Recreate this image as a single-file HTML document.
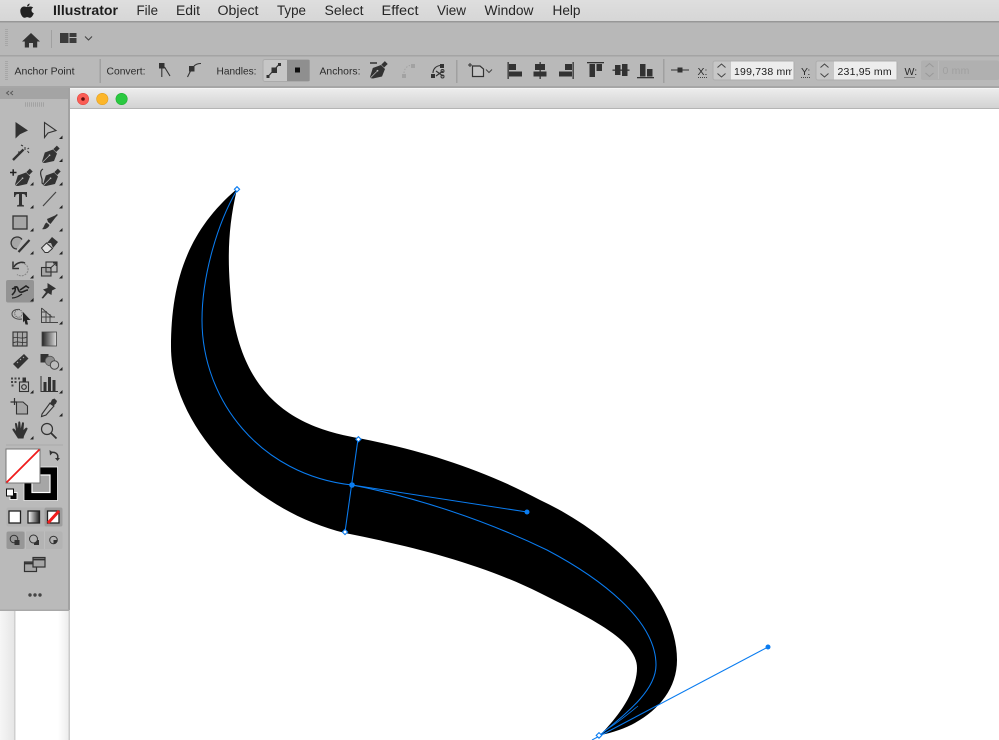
<!DOCTYPE html>
<html>
<head>
<meta charset="utf-8">
<style>
html,body{margin:0;padding:0;background:#fff;width:999px;height:740px;overflow:hidden}
svg{display:block;position:absolute;left:0;top:0}
text{font-family:"Liberation Sans",sans-serif}
.m{font-size:13.5px;fill:#262626}
.l{font-size:10.5px;fill:#2c2c2c}
.v{font-size:10.5px;fill:#1c1c1c}
</style>
</head>
<body>
<svg width="999" height="740" viewBox="0 0 999 740" xmlns="http://www.w3.org/2000/svg">
<defs>
<linearGradient id="mb" x1="0" y1="0" x2="0" y2="1"><stop offset="0" stop-color="#dedede"/><stop offset="1" stop-color="#d6d6d6"/></linearGradient>
<linearGradient id="tb" x1="0" y1="0" x2="0" y2="1"><stop offset="0" stop-color="#ececec"/><stop offset="1" stop-color="#d2d2d2"/></linearGradient>
<linearGradient id="gr" x1="0" y1="0" x2="1" y2="0"><stop offset="0" stop-color="#222"/><stop offset="1" stop-color="#ddd"/></linearGradient>
<linearGradient id="gr2" x1="0" y1="0" x2="1" y2="0"><stop offset="0" stop-color="#fff"/><stop offset="1" stop-color="#222"/></linearGradient>
<linearGradient id="sl" x1="0" y1="0" x2="1" y2="0"><stop offset="0" stop-color="#f6f6f6"/><stop offset="1" stop-color="#e6e6e6"/></linearGradient>
<linearGradient id="sr" x1="0" y1="0" x2="1" y2="0"><stop offset="0" stop-color="#fff"/><stop offset="1" stop-color="#ececec"/></linearGradient>
<filter id="b" filterUnits="userSpaceOnUse" x="0" y="0" width="999" height="740"><feGaussianBlur stdDeviation="0.35"/></filter>
<path id="t" d="M3.500 0V3.500H0Z" fill="#222"/>
<g id="pn">
<path fill="#333" d="M0 16L2.800 7L11 4L15 8L12 15.500L3 17.500L1 17.300Z"/>
<path d="M.8 16.500L6.800 10.500" stroke="#bababa" stroke-width=".7"/>
<circle cx="7.500" cy="9.800" r=".9" fill="#bababa"/>
<rect x="12.500" y="0.800" width="4" height="5" fill="#333" transform="rotate(45 14.500 3.300)"/>
</g>
</defs>

<!-- page background -->
<rect width="999" height="740" fill="#fff"/>
<rect x="0" y="600" width="14" height="140" fill="url(#sl)"/>
<rect x="14" y="600" width="1.500" height="140" fill="#cfcfcf"/>
<rect x="58" y="600" width="11" height="140" fill="url(#sr)"/>
<rect x="68.500" y="100" width="1.500" height="640" fill="#cbcbcb"/>

<!-- artwork -->
<path fill="#000" d="M237 189C186 232 171 285 171 347C171 425 250 510 345 533C410 546 480 563 540 593C590 618 637 640 637 668C637 690 620 715 600 735C640 728 677 700 677 660C677 600 615 535 540 500C480 468 420 450 358 438C300 428 245 402 232 310C228 270 226 235 237 189Z"/>
<g fill="none" stroke="#0a7cf0" stroke-width="1.050">
<path d="M237 190C218 222 202 275 202 320C202 400 260 475 352 485C415 497 485 520 547 550C600 578 656 620 656 665C656 690 628 712 600 735"/>
<path d="M358 439L345 532"/>
<path d="M352 485L527 512"/>
<path d="M592 740L768 647"/>
<path d="M604 731C615 725 628 714 638 706" stroke-width=".8"/>
</g>
<g fill="#0a7cf0">
<circle cx="352" cy="485" r="2.800"/>
<circle cx="527" cy="512" r="2.500"/>
<circle cx="768" cy="647" r="2.500"/>
</g>
<g fill="#fff" stroke="#0a7cf0" stroke-width="1.100">
<path d="M237 186.700L239.600 189.300L237 191.900L234.400 189.300Z"/>
<path d="M358.400 436.700L361 439.300L358.400 441.900L355.800 439.300Z"/>
<path d="M345 529.400L347.600 532L345 534.600L342.400 532Z"/>
<path d="M599 732.600L601.800 735.400L599 738.200L596.200 735.400Z"/>
</g>

<g filter="url(#b)">
<!-- menu bar -->
<rect width="999" height="21" fill="url(#mb)"/>
<path fill="#222" d="M29.500 3.500C28 4 27 5 27 6.500C28.500 6.500 29.800 5.300 29.500 3.500ZM27 7C25.800 7 25 6.400 24 6.500C22 6.700 20.300 8.300 20.300 11C20.300 14 22.500 17.800 24.400 17.800C25.400 17.800 26 17.100 27.200 17.100C28.400 17.100 28.900 17.800 30 17.800C31.700 17.800 33.300 15 33.800 13.300C32.400 12.700 31.500 11.600 31.500 10.200C31.500 9 32.100 8.100 33.200 7.500C32.400 6.900 31.400 6.500 30.400 6.500C29 6.500 28 7 27 7Z"/>
<text x="53" y="15" font-size="13.500" font-weight="700" fill="#1f1f1f" textLength="65" lengthAdjust="spacingAndGlyphs">Illustrator</text>
<g class="m">
<text x="136.500" y="15" textLength="21.500" lengthAdjust="spacingAndGlyphs">File</text>
<text x="176" y="15" textLength="24" lengthAdjust="spacingAndGlyphs">Edit</text>
<text x="217.500" y="15" textLength="41" lengthAdjust="spacingAndGlyphs">Object</text>
<text x="277" y="15" textLength="29" lengthAdjust="spacingAndGlyphs">Type</text>
<text x="324.500" y="15" textLength="39" lengthAdjust="spacingAndGlyphs">Select</text>
<text x="381.500" y="15" textLength="37" lengthAdjust="spacingAndGlyphs">Effect</text>
<text x="437" y="15" textLength="29" lengthAdjust="spacingAndGlyphs">View</text>
<text x="484.500" y="15" textLength="49" lengthAdjust="spacingAndGlyphs">Window</text>
<text x="552.500" y="15" textLength="28" lengthAdjust="spacingAndGlyphs">Help</text>
</g>
<rect y="21" width="999" height="1.500" fill="#979797"/>

<!-- toolbars -->
<rect y="22.500" width="999" height="32.500" fill="#b8b8b8"/>
<rect y="55" width="999" height="1.500" fill="#a4a4a4"/>
<rect y="56.500" width="999" height="29.500" fill="#b9b9b9"/>
<rect y="86" width="999" height="2" fill="#a6a6a6"/>

<!-- grips -->
<path d="M6.500 29V47M6.500 61V80" stroke="#a6a6a6" stroke-width="3" stroke-dasharray="1 1"/>

<!-- home & workspace -->
<path fill="#333" d="M31 33L22 41.500L24.800 41.500L24.800 47.500L29 47.500L29 43L33 43L33 47.500L37.200 47.500L37.200 41.500L40 41.500Z"/>
<rect x="51" y="30" width="1" height="18" fill="#a0a0a0"/>
<g fill="#3a3a3a">
<rect x="60" y="33" width="8.500" height="10"/>
<rect x="69.500" y="33" width="7" height="4"/>
<rect x="69.500" y="38" width="7" height="5"/>
</g>
<path d="M85 36.500L88.500 40L92 36.500" fill="none" stroke="#444" stroke-width="1.100"/>

<!-- anchor row -->
<text class="l" x="14.500" y="74.500" textLength="60" lengthAdjust="spacingAndGlyphs">Anchor Point</text>
<rect x="99.500" y="59" width="1.500" height="24" fill="#a0a0a0"/>
<text class="l" x="106.500" y="74.500" textLength="39" lengthAdjust="spacingAndGlyphs">Convert:</text>
<rect x="159" y="63" width="5.500" height="5.500" fill="#333"/>
<path d="M161.800 68V77M164.500 67L170 76" stroke="#333" stroke-width="1.100" fill="none"/>
<rect x="189" y="66" width="5.500" height="5.500" fill="#333"/>
<path d="M194 66C196 64 198 63.500 201 63.500M190.500 71L187.500 77" stroke="#333" stroke-width="1.100" fill="none"/>
<text class="l" x="216.500" y="74.500" textLength="40" lengthAdjust="spacingAndGlyphs">Handles:</text>
<rect x="263" y="59.500" width="46.500" height="22" rx="2" fill="#c6c6c6" stroke="#aaa"/>
<rect x="287" y="60" width="22.500" height="21" fill="#8f8f8f"/>
<rect x="295" y="67.500" width="5" height="5" fill="#111"/>
<path d="M268 76.500L279 64.500" stroke="#333" stroke-width="1.100"/>
<rect x="271.500" y="67.500" width="5.500" height="5.500" fill="#333"/>
<rect x="278" y="63" width="3" height="3" fill="#333"/>
<rect x="266.500" y="75" width="3" height="3" fill="#333"/>
<text class="l" x="319.500" y="74.500" textLength="41" lengthAdjust="spacingAndGlyphs">Anchors:</text>
<!-- pen minus -->
<use href="#pn" x="370" y="61"/>
<path d="M370 63H377" stroke="#333" stroke-width="1.500"/>
<!-- disabled -->
<g fill="#a2a2a2">
<rect x="402" y="74" width="4" height="4"/>
<rect x="411" y="64" width="4" height="4"/>
</g>
<path d="M404 73C404 69 407 66 410 65.500" stroke="#a2a2a2" fill="none" stroke-dasharray="1.500 1.500"/>
<!-- scissors -->
<rect x="431" y="74" width="4" height="4" fill="#333"/>
<rect x="440" y="64" width="4" height="4" fill="#333"/>
<path d="M433 73C433 69 436 66 440 65.500M436 71L443 76M443 71L436 76" stroke="#333" fill="none" stroke-width="1.100"/>
<circle cx="442.500" cy="71" r="1.500" fill="none" stroke="#333"/>
<circle cx="442.500" cy="76.500" r="1.500" fill="none" stroke="#333"/>
<rect x="456" y="60" width="1.500" height="23" fill="#a0a0a0"/>
<!-- shape select -->
<path d="M472.500 66H480L483.500 69V76.500H472.500Z" fill="#c4c4c4" stroke="#333" stroke-width="1.200"/>
<path d="M468 65H472M470 63V67" stroke="#333"/>
<path d="M486 69.500L489 72.500L492 69.500" stroke="#444" fill="none" stroke-width="1"/>

<!-- align group -->
<g fill="#333">
<rect x="507.500" y="62" width="1.300" height="17"/><rect x="509" y="64" width="7" height="6"/><rect x="509" y="71.500" width="13" height="5"/>
<rect x="539.500" y="62" width="1.300" height="17"/><rect x="535" y="64" width="10" height="6"/><rect x="533.500" y="71.500" width="13" height="5"/>
<rect x="572.500" y="62" width="1.300" height="17"/><rect x="565" y="64" width="7" height="6"/><rect x="559" y="71.500" width="13" height="5"/>
<rect x="587" y="62" width="17" height="1.300"/><rect x="589.500" y="64" width="5.500" height="13"/><rect x="596.500" y="64" width="5.500" height="7"/>
<rect x="612.500" y="69.500" width="17" height="1.300"/><rect x="615" y="65" width="5.500" height="10"/><rect x="622" y="64" width="5.500" height="12"/>
<rect x="637" y="77" width="17" height="1.300"/><rect x="640" y="64" width="5.500" height="12.500"/><rect x="647" y="69" width="5.500" height="7.500"/>
</g>
<rect x="663" y="59" width="1.500" height="24" fill="#a0a0a0"/>
<path d="M671 70H689" stroke="#333" stroke-width="1.100"/>
<rect x="677.500" y="67.500" width="5" height="5" fill="#333"/>

<!-- X field -->
<text class="l" x="697.500" y="75" font-size="11">X:</text>
<path d="M698 77.500H707" stroke="#444" stroke-dasharray="1 1"/>
<rect x="713" y="61" width="81" height="19" rx="2" fill="#c7c7c7" stroke="#adadad"/>
<rect x="731" y="61.500" width="62.500" height="18" fill="#ededed"/>
<path d="M717.500 67.500L721.500 64L725.500 67.500M717.500 73.500L721.500 77L725.500 73.500" fill="none" stroke="#444" stroke-width="1"/>
<svg x="731" y="61" width="61" height="19"><text class="v" x="3" y="14" letter-spacing=".2">199,738 mm</text></svg>
<!-- Y field -->
<text class="l" x="801" y="75" font-size="11">Y:</text>
<path d="M801 77.500H810" stroke="#444" stroke-dasharray="1 1"/>
<rect x="816" y="61" width="81" height="19" rx="2" fill="#c7c7c7" stroke="#adadad"/>
<rect x="834" y="61.500" width="62.500" height="18" fill="#ededed"/>
<path d="M820.500 67.500L824.500 64L828.500 67.500M820.500 73.500L824.500 77L828.500 73.500" fill="none" stroke="#444" stroke-width="1"/>
<text class="v" x="837.500" y="75" letter-spacing=".2">231,95 mm</text>
<!-- W field -->
<text class="l" x="904.500" y="75" font-size="11">W:</text>
<path d="M904.500 77.500H915" stroke="#444" stroke-dasharray="1 1"/>
<rect x="921" y="60.500" width="78" height="19.500" rx="2" fill="#b0b0b0"/>
<rect x="938" y="61" width="1" height="18" fill="#bababa"/>
<path d="M925.500 67L929.500 63.500L933.500 67M925.500 73L929.500 76.500L933.500 73" fill="none" stroke="#999" stroke-width="1"/>
<text x="942.500" y="74" font-size="10.500" fill="#a0a0a0" letter-spacing=".2">0 mm</text>

<!-- document window title -->
<rect x="70" y="88" width="929" height="1.500" fill="#f4f4f4"/>
<rect x="70" y="89" width="929" height="19" fill="url(#tb)"/>
<rect x="70" y="108" width="929" height="1" fill="#b4b4b4"/>
<circle cx="83" cy="99" r="5.700" fill="#fb5d55" stroke="#e0453f" stroke-width=".6"/>
<circle cx="83" cy="99" r="1.800" fill="#60100c"/>
<circle cx="102.300" cy="99" r="5.700" fill="#fcb62c" stroke="#e09e20" stroke-width=".6"/>
<circle cx="121.600" cy="99" r="5.700" fill="#2ac93f" stroke="#20ad32" stroke-width=".6"/>

<!-- tool panel -->
<rect x="0" y="88" width="69" height="522" fill="#bababa"/>
<rect x="0" y="88" width="69" height="11" fill="#a4a4a4"/>
<rect x="68" y="88" width="2" height="522" fill="#a2a2a2"/>
<rect x="0" y="609.500" width="69" height="1.500" fill="#a8a8a8"/>
<path d="M9 91L6.500 93L9 95M13 91L10.500 93L13 95" fill="none" stroke="#555" stroke-width=".9"/>
<path d="M25 104.500H44" stroke="#a2a2a2" stroke-width="4.500" stroke-dasharray="1 1"/>

<!-- row 1 -->
<path fill="#333" d="M15.500 122V138.500L20 134.200L28 130.500Z"/>
<path fill="none" stroke="#333" stroke-width="1.100" d="M44.500 122.500V137.500L48 133L56 130.500Z"/>
<use href="#t" x="59" y="135.500"/>
<!-- wand, pen -->
<path d="M13 160L23.500 149.500" stroke="#333" stroke-width="2.400"/>
<path d="M25 147V150M23 146L21 145M27.500 151L29 153M20 152H18M29 148L27.500 149" stroke="#333" stroke-width="1"/>
<use href="#pn" x="42" y="145.500"/>
<use href="#t" x="59" y="158.500"/>
<!-- add anchor, anchor curv -->
<path d="M10 172.500H16.500M13.200 169.300V175.800" stroke="#222" stroke-width="1.500"/>
<use href="#pn" x="15" y="168.500"/>
<use href="#t" x="30" y="182"/>
<use href="#pn" x="43" y="168.500"/>
<path d="M43 169C39 171 41 176 42 179C42.500 182 41 184 44 184" fill="none" stroke="#333" stroke-width="1.200"/>
<use href="#t" x="59" y="182"/>
<!-- type, line -->
<path fill="#333" d="M14 192H27V197H25.800C25.500 194.500 24.800 194 22 194V204C22 205 22.500 205.300 24 205.300V206.500H17V205.300C18.500 205.300 19 205 19 204V194C16.200 194 15.500 194.500 15.200 197H14Z"/>
<use href="#t" x="30" y="205"/>
<path d="M43 206L56 192" stroke="#444" stroke-width="1.200"/>
<use href="#t" x="59" y="205"/>
<!-- rect, brush -->
<rect x="13" y="216" width="14" height="13" fill="#a6a6a6" stroke="#333" stroke-width="1.300"/>
<use href="#t" x="30" y="228"/>
<path fill="#333" d="M47 219L55 215.500L57 214L57.800 215L55.500 217.500L50.500 224L48 222ZM46.500 222.500L49.500 225C48.500 228 45 230 42 229C44 228 44 224 46.500 222.500Z"/>
<use href="#t" x="59" y="228"/>
<!-- shaper, eraser -->
<path d="M22 239.500A6 6 0 1 0 17 249" fill="#a6a6a6" stroke="#333" stroke-width="1.300"/>
<path d="M18.500 252L29.500 240" stroke="#333" stroke-width="2.200"/>
<use href="#t" x="30" y="251"/>
<path fill="#333" d="M47 243L52 237L58 242L53 248L51 243Z"/>
<path fill="#e0e0e0" stroke="#333" stroke-width="1" d="M41.500 248L46.500 243L52.500 248.500L48 252.500H45Z"/>
<use href="#t" x="59" y="251"/>
<!-- rotate, scale -->
<path d="M16 265C20 261 27 263 28 268.500C28.800 274 22 278 17 274.500" fill="none" stroke="#888" stroke-width="1.100" stroke-dasharray="2 1"/>
<path d="M13 261.500V268.500H19" fill="none" stroke="#333" stroke-width="1.500"/>
<path d="M14 267C16 262.500 22 261.500 25 263" fill="none" stroke="#333" stroke-width="1.500"/>
<use href="#t" x="30" y="275"/>
<rect x="41.500" y="267.500" width="9.500" height="8.500" fill="#a6a6a6" stroke="#333" stroke-width="1.100"/>
<rect x="46" y="262" width="11" height="10" fill="none" stroke="#333" stroke-width="1.100"/>
<path d="M50 268.500L56 263M53 263H56V266" fill="none" stroke="#333" stroke-width="1"/>
<use href="#t" x="59" y="275"/>
<!-- width tool selected -->
<rect x="6" y="280" width="28" height="22.500" rx="2" fill="#939393"/>
<path d="M12 295C15 292 16 290 15 287C19 286 17 290 20 292C23 293 25 290 28 290M12 289C14 288 16 288 16 287" fill="none" stroke="#222" stroke-width="1.600"/>
<path d="M20 290L26 286L29 288" fill="none" stroke="#222" stroke-width="1.600"/>
<path d="M12 298C16 298 19 296 22 294" fill="none" stroke="#222" stroke-width="1.200"/>
<use href="#t" x="30" y="298"/>
<!-- pin -->
<path fill="#333" d="M47.500 283L56 288.500L52 290.500L51.500 295L48 293L43 298.500L41.500 298L46 292L43 289.500L47.500 288Z"/>
<use href="#t" x="59" y="298"/>
<!-- shape builder, perspective -->
<path d="M20 309.500C14 309 12 311.500 12 314C12 317 16 320 22 319" fill="none" stroke="#444" stroke-width="1"/>
<circle cx="18.500" cy="313.500" r="3.800" fill="#bbb" stroke="#555" stroke-dasharray="1 1"/>
<path fill="#222" d="M23 312L30.500 320L27 320L28 324.500L25.500 324.500L24.500 320.500L23 322.500Z"/>
<path fill="none" stroke="#444" stroke-width="1" d="M41.500 308V322.500H58M41.500 308L52 317M46 311V322M50 314V322M41.500 312H47M41.500 317H55"/>
<use href="#t" x="59" y="321"/>
<!-- mesh, gradient -->
<rect x="13" y="332" width="14" height="14" fill="#a8a8a8" stroke="#333" stroke-width="1.100"/>
<path d="M13 338C17 336 22 340 27 337M13 343C17 340 22 344 27 342M18 332C16 336 19 341 17 346M23 332C21 336 24 341 22 346" fill="none" stroke="#333" stroke-width=".8"/>
<rect x="42" y="332" width="14.500" height="14" fill="url(#gr)" stroke="#444" stroke-width=".8"/>
<!-- ruler, blend -->
<path fill="#333" d="M13 364L24 354L28.500 358.500L18 369Z"/>
<path d="M17 362L18 363M20 359L21 360M23 357L24 358" stroke="#aaa"/>
<rect x="40.500" y="354" width="8" height="8.500" fill="#333"/>
<circle cx="50" cy="361" r="4.800" fill="#8e8e8e" stroke="#555" stroke-width=".8"/>
<circle cx="54.500" cy="365" r="4.200" fill="#bbb" stroke="#444" stroke-width="1"/>
<use href="#t" x="59" y="367"/>
<!-- symbol sprayer, graph -->
<g fill="#444"><rect x="11" y="377.500" width="2" height="2"/><rect x="14.500" y="377.500" width="2" height="2"/><rect x="18" y="377.500" width="2" height="2"/><rect x="11" y="381" width="2" height="2"/><rect x="14.500" y="381" width="2" height="2"/><rect x="11.500" y="384.500" width="2" height="2"/></g>
<rect x="19.500" y="382" width="9" height="9.500" fill="#bbb" stroke="#333" stroke-width="1.100"/>
<rect x="22.500" y="377.500" width="3.500" height="4" fill="#333"/>
<circle cx="24" cy="387" r="2.300" fill="none" stroke="#333" stroke-width="1.200"/>
<use href="#t" x="30" y="390"/>
<path d="M41 376V391.500H58" fill="none" stroke="#333" stroke-width="1"/>
<g fill="#333"><rect x="43.500" y="382" width="3" height="9"/><rect x="48" y="377" width="3" height="14"/><rect x="52.500" y="380" width="3" height="11"/></g>
<use href="#t" x="59" y="390"/>
<!-- artboard, eyedropper -->
<path d="M10.500 402H17M14.500 398V405" stroke="#333" stroke-width="1.200"/>
<path d="M16.500 402H23L27.500 406V414H16.500Z" fill="#a6a6a6" stroke="#333" stroke-width="1.100"/>
<path d="M42 414L50 403L54 406L46 415L41.500 416.500Z" fill="#bbb" stroke="#333" stroke-width="1.100"/>
<path d="M50 404L52 399.500L54.500 398.500L57 401L56 403.500L53 406Z" fill="#333"/>
<use href="#t" x="59" y="413"/>
<!-- hand, zoom -->
<path fill="#333" d="M17 437L12.500 430C12 428.500 13.500 428 14.500 429L16 431L15 424C15 422.500 16.500 422.500 17 424L18 428.500L18.300 422.500C18.500 421 20 421 20.300 422.500L20.800 428.500L22 423C22.300 422 24 422 24 423.500L23.500 430L25.500 428C26.500 427 28 428 27.500 429L24 436L23.500 438.500H18Z"/>
<use href="#t" x="30" y="436"/>
<circle cx="47" cy="429" r="5.500" fill="none" stroke="#333" stroke-width="1.200"/>
<path d="M51 433L56.500 438.500" stroke="#333" stroke-width="1.800"/>

<rect x="6" y="444.500" width="57" height="1" fill="#aaaaaa"/>

<!-- stroke box -->
<rect x="24" y="467" width="33.500" height="33.500" fill="#000" stroke="#eee" stroke-width=".8"/>
<rect x="32" y="475" width="18" height="17.500" fill="#a6a6a6" stroke="#fff" stroke-width="1.200"/>
<!-- fill box -->
<rect x="6" y="449" width="34" height="34" fill="#fff" stroke="#777" stroke-width="1"/>
<path d="M6.500 482.500L39.500 449.500" stroke="#f01a1a" stroke-width="1.800"/>
<!-- swap -->
<path d="M50 452.500C55 451.500 59 453.500 57.500 459" fill="none" stroke="#333" stroke-width="1.500"/>
<path d="M49.500 450L53 452.500L50 455.500ZM55 458H60L57.500 461Z" fill="#333"/>
<!-- default -->
<rect x="10" y="492.500" width="7" height="7" fill="#111" stroke="#fff" stroke-width=".9"/>
<rect x="6.500" y="489" width="7" height="7" fill="#fff" stroke="#111" stroke-width="1"/>
<!-- colour mode -->
<rect x="6.500" y="507.500" width="56" height="19" rx="2" fill="#b3b3b3"/>
<rect x="44.500" y="507.500" width="18" height="19" rx="2" fill="#9d9d9d"/>
<rect x="9" y="511" width="11.500" height="12" fill="#fff" stroke="#222" stroke-width="1.300"/>
<rect x="28" y="511" width="11.500" height="12" fill="url(#gr2)" stroke="#222" stroke-width="1.300"/>
<rect x="47.500" y="511" width="11.500" height="12" fill="#fff" stroke="#222" stroke-width="1.300"/>
<path d="M48 523L59 511" stroke="#f01a1a" stroke-width="3"/>
<!-- draw modes -->
<rect x="6.500" y="531.500" width="56" height="17.500" rx="2" fill="#b3b3b3"/>
<rect x="6.500" y="531.500" width="18" height="17.500" rx="2" fill="#979797"/>
<rect x="25" y="531.500" width="1" height="17.500" fill="#bdbdbd"/>
<rect x="44" y="531.500" width="1" height="17.500" fill="#bdbdbd"/>
<circle cx="14" cy="539" r="3.800" fill="none" stroke="#333"/><rect x="14.500" y="540" width="5" height="5" fill="#333"/>
<rect x="34" y="540" width="5" height="5" fill="#333"/><circle cx="33.500" cy="539" r="4" fill="#b3b3b3" stroke="#333"/>
<circle cx="53.500" cy="540" r="3.800" fill="#b3b3b3" stroke="#333"/><path d="M53.500 540H57.300A3.800 3.800 0 0 1 53.500 543.800Z" fill="#333"/>
<!-- screen mode -->
<rect x="24.500" y="562" width="12" height="9.500" fill="#a6a6a6" stroke="#333" stroke-width="1.200"/>
<rect x="33" y="557.500" width="12" height="9.500" fill="#a6a6a6" stroke="#333" stroke-width="1.200"/>
<path d="M24.500 563.500H33M33 559.500H45" stroke="#333" stroke-width="1.800"/>
<!-- dots -->
<g fill="#444"><circle cx="30" cy="595" r="1.700"/><circle cx="35" cy="595" r="1.700"/><circle cx="40" cy="595" r="1.700"/></g>
</g>
</svg>
</body>
</html>
